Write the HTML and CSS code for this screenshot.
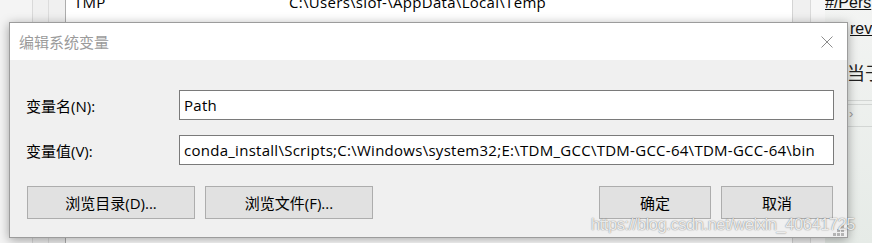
FILE: index.html
```html
<!DOCTYPE html>
<html lang="zh-CN">
<head>
  <meta charset="utf-8">
  <title>编辑系统变量</title>
  <link rel="stylesheet" href="styles.css">
</head>
<body>
  <div class="screen">
    <!-- Environment variables window behind the dialog -->
    <div class="env-window">
      <div class="env-pane env-pane-a"></div>
      <div class="env-pane env-pane-b"></div>
      <div class="env-pane env-pane-c"></div>
      <div class="env-list">
        <div class="env-row">
          <span class="env-name">TMP</span>
          <span class="env-value">C:\Users\slof-\AppData\Local\Temp</span>
        </div>
      </div>
      <div class="env-scroll"></div>
      <div class="env-edge"></div>
    </div>
    <!-- Blog page behind on the right -->
    <div class="blog">
      <div class="blog-link blog-link-top">#/Pers</div>
      <div class="blog-link blog-link-rev">rev0</div>
      <div class="blog-text">当于</div>
      <div class="blog-rule blog-rule-first"></div>
      <div class="blog-rule"></div>
      <div class="blog-arrow">›</div>
      <div class="blog-rule"></div>
    </div>
    <!-- Edit system variable dialog -->
    <div class="dialog">
      <div class="dialog-title">
        <span class="dialog-caption">编辑系统变量</span>
        <svg class="dialog-close" width="12" height="12" viewBox="0 0 12 12">
          <path d="M0.5 0.5L11.5 11.5M11.5 0.5L0.5 11.5" stroke="#8c8c8c" stroke-width="1" fill="none"/>
        </svg>
      </div>
      <div class="dialog-body">
        <div class="fields">
          <label class="field-label" for="varName">变量名(N):</label>
          <input class="field-input" id="varName" type="text" value="Path">
          <label class="field-label" for="varValue">变量值(V):</label>
          <input class="field-input" id="varValue" type="text" value="conda_install\Scripts;C:\Windows\system32;E:\TDM_GCC\TDM-GCC-64\TDM-GCC-64\bin">
        </div>
        <div class="actions">
          <div class="action-group">
            <button class="btn btn-wide" type="button">浏览目录(D)...</button>
            <button class="btn btn-wide" type="button">浏览文件(F)...</button>
          </div>
          <div class="action-group">
            <button class="btn btn-narrow" type="button">确定</button>
            <button class="btn btn-narrow" type="button">取消</button>
          </div>
        </div>
      </div>
      <svg class="grip" width="11" height="11" viewBox="0 0 11 11">
        <rect x="8" y="0" width="3" height="3" fill="#b4b4b4"/>
        <rect x="4" y="4" width="3" height="3" fill="#b4b4b4"/>
        <rect x="8" y="4" width="3" height="3" fill="#b4b4b4"/>
        <rect x="0" y="8" width="3" height="3" fill="#b4b4b4"/>
        <rect x="4" y="8" width="3" height="3" fill="#b4b4b4"/>
        <rect x="8" y="8" width="3" height="3" fill="#b4b4b4"/>
      </svg>
    </div>
    <div class="watermark">https://blog.csdn.net/weixin_40641725</div>
  </div>
</body>
</html>
```

FILE: styles.css
```css
html, body { margin: 0; padding: 0; }
body { font-family: "Open Sans", "Noto Sans CJK SC", sans-serif; font-size: 15px; color: #000; }
.screen { position: relative; width: 872px; height: 243px; overflow: hidden; background: #eef0ee; }

/* window behind */
.env-window { position: absolute; left: 0; top: 0; width: 825px; height: 243px; display: flex; background: #f0f0f0; }
.env-pane { height: 100%; box-sizing: border-box; }
.env-pane-a { width: 33px; background: #f4f4f4; border-right: 1px solid #d9d9d9; }
.env-pane-b { width: 16px; background: #f0f0f0; border-right: 1px solid #dcdcdc; }
.env-pane-c { width: 17px; background: #f0f0f0; border-right: 1px solid #adadad; }
.env-list { width: 727px; height: 100%; background: #fff; box-sizing: border-box; border-right: 1px solid #d4d4d4; }
.env-row { display: flex; margin-top: -8px; padding-left: 8px; line-height: 20px; letter-spacing: 0.3px; white-space: nowrap; }
.env-name { width: 215px; }
.env-scroll { width: 17px; height: 100%; background: #f0f0f0; border-right: 1px solid #dadada; }
.env-edge { width: 14px; height: 100%; background: #f7f7f7; }

/* blog page */
.blog { position: absolute; left: 825px; top: 0; width: 47px; height: 243px; overflow: hidden; background: linear-gradient(180deg, #f3f4f3, #e6ebe7); font-family: "Liberation Sans", "Noto Sans CJK SC", sans-serif; white-space: nowrap; }
.blog-link { font-size: 16px; line-height: 18px; text-decoration: underline; color: #111; }
.blog-link-top { margin-top: -6px; }
.blog-link-rev { margin-top: 8px; padding-left: 25px; }
.blog-text { margin-top: 24px; padding-left: 22px; font-size: 18px; line-height: 20px; color: #222; font-family: "Noto Sans CJK SC", sans-serif; }
.blog-rule { margin-top: 3px; margin-left: 22px; height: 1px; background: #d3d6d4; }
.blog-rule-first { margin-top: 18px; }
.blog-arrow { padding-left: 24px; font-size: 13px; line-height: 18px; color: #9a9a9a; }

/* dialog */
.dialog { position: absolute; left: 9px; top: 22px; width: 839px; height: 216px; box-sizing: border-box; border: 1px solid #9c9c9c; background: #f0f0f0; box-shadow: 0 2px 10px rgba(0, 0, 0, 0.35); display: flex; flex-direction: column; }
.dialog-title { height: 37px; background: #fff; display: flex; align-items: center; justify-content: space-between; padding: 0 14px 0 9px; }
.dialog-caption { font-family: "Noto Sans CJK SC", sans-serif; font-size: 15px; color: #9b9b9b; }
.dialog-body { flex: 1; display: flex; flex-direction: column; padding-top: 30px; }
.fields { display: grid; grid-template-columns: 153px 1fr; row-gap: 15px; align-items: center; padding: 0 13px 0 16px; }
.field-label { font-size: 15px; }
.field-input { height: 30px; box-sizing: border-box; margin: 0; border: 1px solid #7a7a7a; background: #fff; padding: 0 3px 0 4px; font-family: "Open Sans", sans-serif; font-size: 15px; letter-spacing: 0.27px; color: #000; outline: none; }
.actions { display: flex; justify-content: space-between; margin-top: 21px; padding: 0 14px 0 17px; }
.action-group { display: flex; gap: 10px; }
.btn { height: 33px; margin: 0; border: 1px solid #adadad; background: #e1e1e1; font-family: "Open Sans", "Noto Sans CJK SC", sans-serif; font-size: 15px; color: #000; padding: 0; }
.btn-wide { width: 168px; }
.btn-narrow { width: 112px; }
.grip { position: absolute; right: 3px; bottom: 1px; }

.watermark { position: absolute; left: 591px; top: 215px; font-family: "Liberation Sans", sans-serif; font-size: 16.5px; letter-spacing: -0.45px; color: rgba(255, 255, 255, 0.85); text-shadow: 0 0 1px rgba(0, 0, 0, 0.45), 0 0 2px rgba(0, 0, 0, 0.2); white-space: nowrap; }
```
